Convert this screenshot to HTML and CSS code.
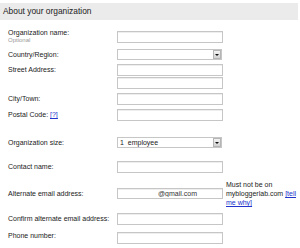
FILE: index.html
```html
<!DOCTYPE html>
<html lang="en">

<head>
    <meta charset="UTF-8">
    <meta name="viewport" content="width=device-width, initial-scale=1.0">
    <title>About your organization</title>
    <link rel="stylesheet" href="styles.css">
</head>

<body>
    <div class="section-head">About your organization</div>

    <form class="org-form">
        <!-- Organization -->
        <div class="row first">
            <label class="label">Organization name:<span class="hint">Optional</span></label>
            <input class="field" type="text">
        </div>
        <div class="row country">
            <label class="label">Country/Region:</label>
            <div class="select">
                <span class="select-text"></span>
                <span class="select-btn"><span class="arrow"></span></span>
            </div>
        </div>
        <div class="row">
            <label class="label">Street Address:</label>
            <input class="field" type="text">
        </div>
        <div class="row cont">
            <span class="label"></span>
            <input class="field" type="text">
        </div>
        <div class="row">
            <label class="label">City/Town:</label>
            <input class="field" type="text">
        </div>
        <div class="row">
            <label class="label">Postal Code: <a href="" class="help">[?]</a></label>
            <input class="field" type="text">
        </div>

        <!-- Size -->
        <div class="row size">
            <label class="label">Organization size:</label>
            <div class="select">
                <span class="select-text">1&nbsp; employee</span>
                <span class="select-btn"><span class="arrow"></span></span>
            </div>
        </div>

        <!-- Contact -->
        <div class="row contact">
            <label class="label">Contact name:</label>
            <input class="field" type="text">
        </div>
        <div class="row email">
            <label class="label">Alternate email address:</label>
            <input class="field field-email" type="text" value="@gmail.com">
            <div class="note">Must not be on mybloggerlab.com <a href="" class="help">[tell me why]</a></div>
        </div>
        <div class="row confirm">
            <label class="label">Confirm alternate email address:</label>
            <input class="field" type="text">
        </div>
        <div class="row phone">
            <label class="label">Phone number:</label>
            <input class="field" type="text">
        </div>
    </form>
</body>

</html>
```

FILE: styles.css
```css
body {
    font-family: "Liberation Sans", Arial, sans-serif;
    margin: 0;
    padding: 0;
    background-color: #fff;
    color: #222;
}

/* Section header */
.section-head {
    margin: 3px 2px 0 0;
    height: 17px;
    line-height: 17px;
    padding-left: 3px;
    font-size: 8.4px;
    color: #222;
    background-color: #ebebeb;
}

/* Form layout */
.org-form {
    padding-left: 8px;
}

.row {
    display: grid;
    grid-template-columns: 109px 106px 75px;
    align-items: center;
    margin-top: 4px;
}

.row.first {
    margin-top: 9px;
}

.row.country {
    margin-top: 5px;
}

.row.cont {
    margin-top: 1px;
}

.row.size {
    margin-top: 16px;
}

.row.contact {
    margin-top: 13px;
}

.row.email {
    margin-top: 7px;
}

.row.confirm {
    margin-top: 6px;
}

.row.phone {
    margin-top: 7px;
}

.row.phone .label {
    align-self: start;
}

.label {
    font-size: 7px;
    line-height: 8px;
    color: #222;
    white-space: nowrap;
}

.hint {
    display: block;
    font-size: 6px;
    line-height: 7px;
    color: #999;
}

.help {
    color: #2233cc;
}

/* Inputs */
.field {
    box-sizing: border-box;
    width: 106px;
    height: 12px;
    margin: 0;
    padding: 0 2px;
    border: 1px solid #c6c6c6;
    box-shadow: inset 0 1px 0 #eee;
    font-family: inherit;
    font-size: 7px;
    color: #333;
    outline: none;
}

.row.email .field {
    height: 11px;
}

.field-email {
    padding-left: 40px;
}

/* Fake select box */
.select {
    box-sizing: border-box;
    width: 105px;
    height: 11px;
    display: flex;
    align-items: center;
    justify-content: space-between;
    border: 1px solid #c6c6c6;
    background-color: #fff;
}

.select-text {
    padding-left: 2px;
    font-size: 7px;
    line-height: 9px;
    color: #222;
    white-space: pre;
}

.select-btn {
    box-sizing: border-box;
    width: 8px;
    height: 9px;
    display: flex;
    align-items: center;
    justify-content: center;
    background: linear-gradient(#f4f4f4, #d2d2d2);
    border: 1px solid #b5b5b5;
}

.arrow {
    width: 0;
    height: 0;
    border-left: 2px solid transparent;
    border-right: 2px solid transparent;
    border-top: 2px solid #111;
}

.note {
    margin-left: 3px;
    font-size: 7px;
    line-height: 9px;
    color: #222;
}
```
